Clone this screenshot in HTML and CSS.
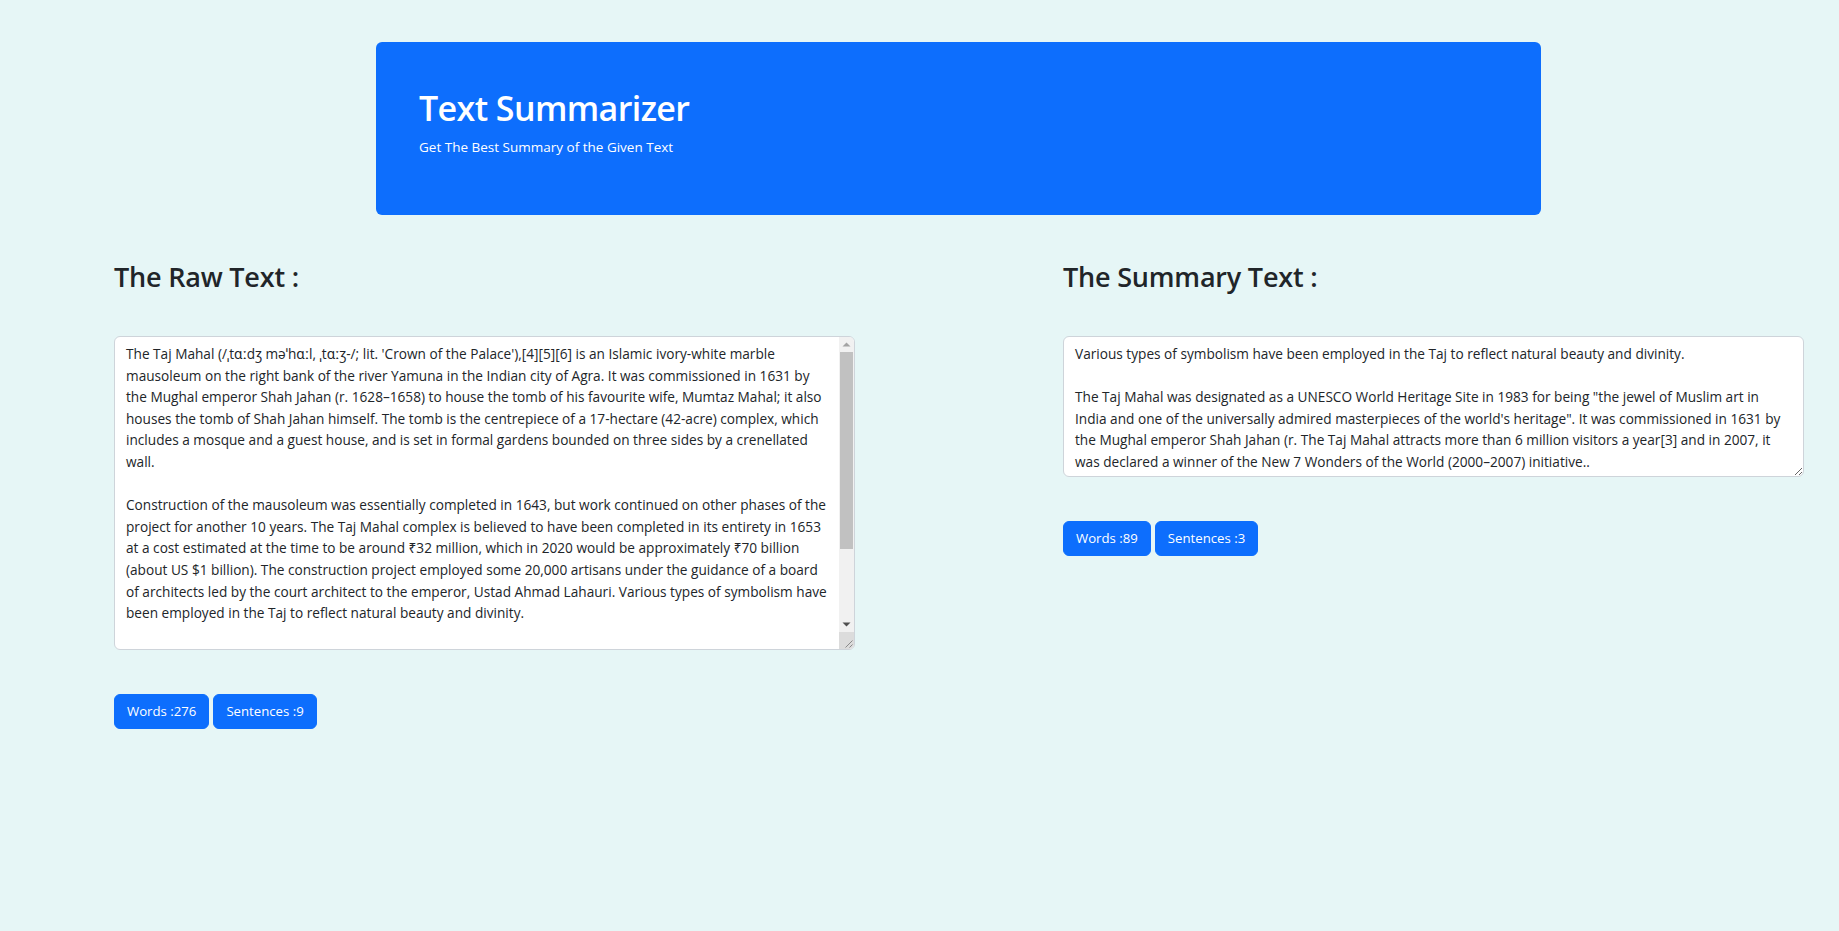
FILE: index.html
```html
<!DOCTYPE html>
<html lang="en">
<head>
<meta charset="utf-8">
<title>Text Summarizer</title>
<link rel="stylesheet" href="styles.css">
</head>
<body>
<header class="top">
  <div class="jumbo">
    <h1 class="jumbo-title">Text Summarizer</h1>
    <p class="jumbo-sub">Get The Best Summary of the Given Text</p>
  </div>
</header>
<main class="cols">
  <section class="col">
    <h3 class="col-title">The Raw Text :</h3>
    <div class="box-wrap">
      <textarea class="box box-raw" wrap="off" readonly>The Taj Mahal (/ˌtɑːdʒ məˈhɑːl, ˌtɑːʒ-/; lit. 'Crown of the Palace'),[4][5][6] is an Islamic ivory-white marble
mausoleum on the right bank of the river Yamuna in the Indian city of Agra. It was commissioned in 1631 by
the Mughal emperor Shah Jahan (r. 1628–1658) to house the tomb of his favourite wife, Mumtaz Mahal; it also
houses the tomb of Shah Jahan himself. The tomb is the centrepiece of a 17-hectare (42-acre) complex, which
includes a mosque and a guest house, and is set in formal gardens bounded on three sides by a crenellated
wall.

Construction of the mausoleum was essentially completed in 1643, but work continued on other phases of the
project for another 10 years. The Taj Mahal complex is believed to have been completed in its entirety in 1653
at a cost estimated at the time to be around ₹32 million, which in 2020 would be approximately ₹70 billion
(about US $1 billion). The construction project employed some 20,000 artisans under the guidance of a board
of architects led by the court architect to the emperor, Ustad Ahmad Lahauri. Various types of symbolism have
been employed in the Taj to reflect natural beauty and divinity.

The Taj Mahal was designated as a UNESCO World Heritage Site in 1983 for being "the jewel of Muslim art in
India and one of the universally admired masterpieces of the world's heritage". It is regarded by many as the
best example of Mughal architecture and a symbol of India's rich history. The Taj Mahal attracts more than 6
million visitors a year[3] and in 2007, it was declared a winner of the New 7 Wonders of the World
(2000–2007) initiative.</textarea>
      <div class="sb" aria-hidden="true">
        <div class="sb-btn">
          <svg class="sb-arrow" width="9" height="5" viewBox="0 0 9 5"><polygon points="0.5,4.5 4.5,0.5 8.5,4.5" fill="#a3a3a3"/></svg>
        </div>
        <div class="sb-track"><div class="sb-thumb"></div></div>
        <div class="sb-btn">
          <svg class="sb-arrow" width="9" height="5" viewBox="0 0 9 5"><polygon points="0.5,0.5 8.5,0.5 4.5,4.5" fill="#505050"/></svg>
        </div>
        <div class="sb-corner">
          <svg width="15" height="15" viewBox="0 0 15 15"><path d="M13.5 6.5 L6.5 13.5 M13.5 10.5 L10.5 13.5" stroke="#8a8a8a" stroke-width="1" fill="none"/></svg>
        </div>
      </div>
    </div>
    <div class="badges">
      <button class="btn" type="button">Words :276</button>
      <button class="btn" type="button">Sentences :9</button>
    </div>
  </section>
  <section class="col">
    <h3 class="col-title">The Summary Text :</h3>
    <div class="box-wrap">
      <textarea class="box box-sum" wrap="off" readonly>Various types of symbolism have been employed in the Taj to reflect natural beauty and divinity.

The Taj Mahal was designated as a UNESCO World Heritage Site in 1983 for being "the jewel of Muslim art in
India and one of the universally admired masterpieces of the world's heritage". It was commissioned in 1631 by
the Mughal emperor Shah Jahan (r. The Taj Mahal attracts more than 6 million visitors a year[3] and in 2007, it
was declared a winner of the New 7 Wonders of the World (2000–2007) initiative..</textarea>
    </div>
    <div class="badges">
      <button class="btn" type="button">Words :89</button>
      <button class="btn" type="button">Sentences :3</button>
    </div>
  </section>
</main>
</body>
</html>
```
FILE: styles.css
```css
html, body {
  margin: 0;
  padding: 0;
}
body {
  background: #e6f6f6;
  font-family: "Open Sans", "Noto Sans", "DejaVu Sans", sans-serif;
  color: #212529;
  min-height: 931px;
}
.top {
  padding-top: 42px;
}
.jumbo {
  margin-left: 376px;
  width: 1165px;
  height: 173px;
  box-sizing: border-box;
  padding: 45px 43px 0;
  background: #0d6efd;
  border-radius: 6px;
  color: #fff;
}
.jumbo-title {
  margin: 0;
  font-size: 34px;
  font-weight: 600;
  letter-spacing: -0.6px;
  line-height: 43px;
}
.jumbo-sub {
  margin: 7px 0 0;
  font-size: 13.5px;
  line-height: 1.5;
}
.cols {
  display: flex;
  gap: 208px;
  padding-left: 114px;
  margin-top: 45px;
}
.col {
  width: 741px;
}
.col-title {
  margin: 0;
  font-size: 27px;
  font-weight: 600;
  letter-spacing: -0.2px;
  line-height: 33px;
  color: #212529;
}
.box-wrap {
  position: relative;
  margin-top: 43px;
}
.box {
  display: block;
  margin: 0;
  width: 100%;
  box-sizing: border-box;
  padding: 6px 11px;
  font-family: "Open Sans", "Noto Sans", "DejaVu Sans", sans-serif;
  font-size: 13.65px;
  line-height: 21.6px;
  color: #212529;
  background: #fff;
  border: 1px solid #ced4da;
  border-radius: 6px;
  resize: vertical;
  overflow: hidden;
  outline: none;
}
.box-raw {
  height: 314px;
  padding-right: 26px;
}
.box-sum {
  height: 141px;
}
.sb {
  position: absolute;
  top: 1px;
  right: 1px;
  bottom: 1px;
  width: 15px;
  display: flex;
  flex-direction: column;
  background: #f1f1f1;
  border-top-right-radius: 5px;
  border-bottom-right-radius: 5px;
  overflow: hidden;
}
.sb-btn {
  height: 15px;
  flex: none;
  display: flex;
  align-items: center;
  justify-content: center;
}
.sb-arrow {
  display: block;
}
.sb-track {
  flex: 1;
  display: flex;
  flex-direction: column;
}
.sb-thumb {
  height: 197px;
  margin: 0 1px;
  background: #c1c1c1;
}
.sb-corner {
  height: 17px;
  flex: none;
  background: #dcdcdc;
  display: flex;
  align-items: flex-end;
  justify-content: flex-end;
}
.sb-corner svg {
  display: block;
}
.badges {
  display: flex;
  gap: 4px;
  margin-top: 44px;
}
.btn {
  font-family: "Open Sans", "Noto Sans", "DejaVu Sans", sans-serif;
  font-size: 13.2px;
  font-weight: 400;
  line-height: 21px;
  padding: 6px 12px;
  color: #fff;
  background: #0d6efd;
  border: 1px solid #0d6efd;
  border-radius: 6px;
  cursor: pointer;
}
```
